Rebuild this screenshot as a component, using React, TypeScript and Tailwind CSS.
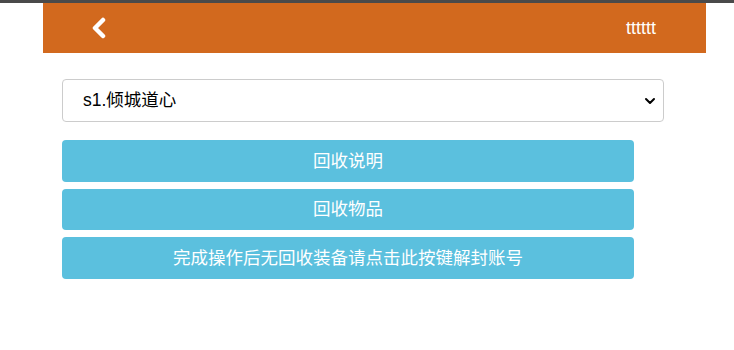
import { ChevronDown } from 'lucide-react'

const buttons = ['回收说明', '回收物品', '完成操作后无回收装备请点击此按键解封账号']

export default function App() {
  return (
    <div
      className="min-h-[350px] bg-white border-t-[3px] border-[#4a4a4a]"
      style={{ fontFamily: '"Liberation Sans", "Noto Sans CJK SC", sans-serif' }}
    >
      <header className="ml-[43px] w-[663px] h-[50px] bg-[#d2691e] flex items-center justify-between pl-[48px] pr-[50px]">
        <svg width="16" height="22" viewBox="0 0 16 22" className="text-white">
          <path d="M12 3 L4 11 L12 19" fill="none" stroke="currentColor" strokeWidth="4.5" strokeLinecap="round" strokeLinejoin="round" />
        </svg>
        <span className="text-white text-[18px] leading-none">tttttt</span>
      </header>

      <div className="ml-[62px] mt-[26px]">
        <div className="w-[602px] h-[43px] border border-[#ccc] rounded-[4px] flex items-center justify-between pl-[20px] pr-[5px] text-[17.5px] text-black">
          <span>s1.倾城道心</span>
          <ChevronDown className="w-4 h-4 text-black" strokeWidth={3} />
        </div>

        <div className="mt-[18px] w-[572px] flex flex-col gap-[7px]">
          {buttons.map((b) => (
            <button
              key={b}
              className="h-[41.5px] rounded-[4px] bg-[#5bc0de] text-white text-[17.5px] flex items-center justify-center"
            >
              {b}
            </button>
          ))}
        </div>
      </div>
    </div>
  )
}
